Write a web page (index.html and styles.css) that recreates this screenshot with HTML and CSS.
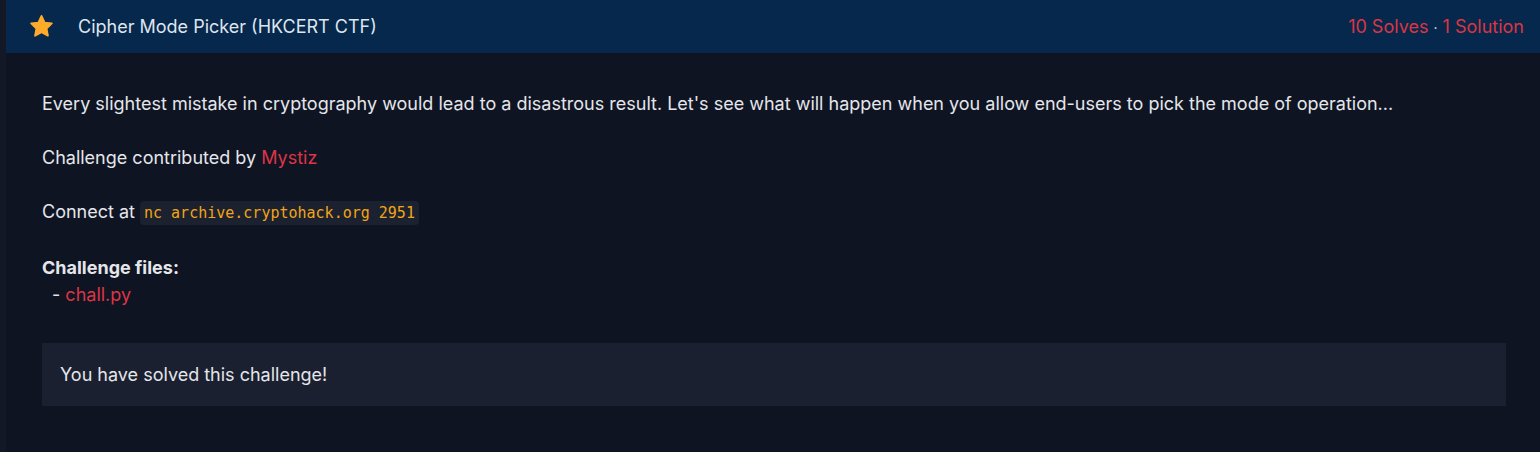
FILE: index.html
```html
<!DOCTYPE html>
<html lang="en">
<head>
<meta charset="utf-8">
<title>Cipher Mode Picker</title>
<link rel="stylesheet" href="styles.css">
</head>
<body>
<div class="page">
  <section class="challenge">
    <header class="challenge-header">
      <div class="title-group">
        <svg class="star" width="27" height="27" viewBox="0 0 24 24" aria-hidden="true">
          <path d="M12 2.6l2.8 5.9 6.4.8-4.7 4.5 1.2 6.4L12 17.1l-5.7 3.1 1.2-6.4-4.7-4.5 6.4-.8z" fill="#fdab2a" stroke="#fdab2a" stroke-width="1.6" stroke-linejoin="round"/>
        </svg>
        <h2 class="title">Cipher Mode Picker (HKCERT CTF)</h2>
      </div>
      <div class="stats"><span class="red">10 Solves</span> <span class="dot">·</span> <span class="red">1 Solution</span></div>
    </header>
    <div class="challenge-body">
      <p>Every slightest mistake in cryptography would lead to a disastrous result. Let's see what will happen when you allow end-users to pick the mode of operation...</p>
      <p>Challenge contributed by <a class="red" href="#">Mystiz</a></p>
      <p>Connect at <code>nc archive.cryptohack.org 2951</code></p>
      <p class="files"><strong>Challenge files:</strong><br><span class="indent">-</span> <a class="red" href="#">chall.py</a></p>
      <div class="solved">You have solved this challenge!</div>
    </div>
  </section>
</div>
</body>
</html>
```

FILE: styles.css
```css
html, body {
  margin: 0;
  padding: 0;
  height: 100%;
}
body {
  background: #131826;
  font-family: Inter, "Noto Sans", sans-serif;
  color: #e4e6ea;
}
.page {
  padding-left: 6px;
  height: 100%;
}
.challenge {
  background: #0f1423;
  height: 100%;
}
.challenge-header {
  height: 53px;
  background: #06284c;
  display: flex;
  align-items: center;
  justify-content: space-between;
  padding: 0 16px 0 22px;
}
.title-group {
  display: flex;
  align-items: center;
  gap: 23px;
}
.star {
  display: block;
}
.title {
  margin: 0;
  font-size: 18px;
  font-weight: 400;
  color: #dfe5ec;
}
.stats {
  font-size: 18px;
  color: #dfe5ec;
}
.red {
  color: #dc3545;
  text-decoration: none;
}
.dot {
  font-size: 14px;
}
.challenge-body {
  padding: 37px 34px 0 36px;
  font-size: 18px;
  line-height: 27px;
}
.challenge-body p {
  margin: 0 0 27px;
}
.challenge-body p.files {
  margin-bottom: 35px;
}
code {
  font-family: "DejaVu Sans Mono", "Liberation Mono", monospace;
  font-size: 15px;
  color: #f2a516;
  background: #1c2130;
  border-radius: 4px;
  padding: 3px 4px;
}
strong {
  font-weight: 700;
}
.indent {
  padding-left: 10px;
}
.solved {
  background: #1b2030;
  padding: 18px 18px;
  line-height: 27px;
}
```
